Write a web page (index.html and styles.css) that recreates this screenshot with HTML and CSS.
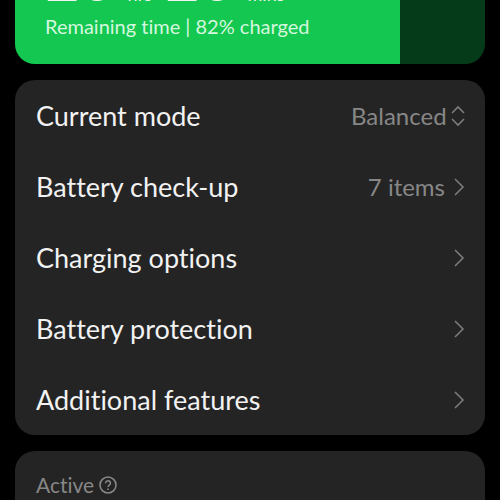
FILE: index.html
```html
<!DOCTYPE html>
<html lang="en">
<head>
<meta charset="utf-8">
<meta name="viewport" content="width=device-width, initial-scale=1">
<title>Battery</title>
<link rel="stylesheet" href="styles.css">
</head>
<body>
<main class="page">
  <section class="battery" style="--level: 82%">
    <p class="time"><span class="digits">20</span><span class="unit">hrs</span><span class="digits">20</span><span class="unit">mins</span></p>
    <p class="status">Remaining time | 82% charged</p>
  </section>

  <section class="card">
    <div class="row">
      <label class="name" for="mode">Current mode</label>
      <select class="value mode" id="mode">
        <option>Balanced</option>
      </select>
      <svg class="updown" viewBox="0 0 14 22" aria-hidden="true"><path d="M1 8 7 2l6 6M1 14l6 6 6-6"/></svg>
    </div>
    <a class="row" href="#checkup">
      <span class="name">Battery check-up</span>
      <span class="value">7 items</span>
      <svg class="chevron" viewBox="0 0 12 18" aria-hidden="true"><path d="m2 1 8 8-8 8"/></svg>
    </a>
    <a class="row" href="#charging">
      <span class="name">Charging options</span>
      <svg class="chevron" viewBox="0 0 12 18" aria-hidden="true"><path d="m2 1 8 8-8 8"/></svg>
    </a>
    <a class="row" href="#protection">
      <span class="name">Battery protection</span>
      <svg class="chevron" viewBox="0 0 12 18" aria-hidden="true"><path d="m2 1 8 8-8 8"/></svg>
    </a>
    <a class="row" href="#features">
      <span class="name">Additional features</span>
      <svg class="chevron" viewBox="0 0 12 18" aria-hidden="true"><path d="m2 1 8 8-8 8"/></svg>
    </a>
  </section>

  <section class="card usage">
    <h2 class="caption">Active</h2>
    <button class="help" type="button" aria-label="About active use">
      <svg class="help-icon" viewBox="0 0 18 18" aria-hidden="true"><circle cx="9" cy="9" r="8"/><path d="M6.600 7.200a2.400 2.400 0 1 1 3.700 2C9.400 9.800 9 10.200 9 11.100M9 12.400v1.600"/></svg>
    </button>
  </section>
</main>
</body>
</html>
```
FILE: styles.css
```css
* {
  box-sizing: border-box;
}

html {
  overflow: hidden;
}

body {
  margin: 0;
  background: #000;
  color: #f2f2f2;
  font-family: Lato, "Open Sans", sans-serif;
  font-variant-ligatures: none;
}

/* The list is scrolled so that the big time is mostly out of view. */
.page {
  display: flex;
  flex-direction: column;
  gap: 16px;
  margin-top: -58px;
  padding: 0 15px;
}

.battery {
  padding: 0 30px 26px;
  border-radius: 0 0 20px 20px;
  background: linear-gradient(to right, #13c750 var(--level), #053b19 var(--level));
}

.time {
  display: flex;
  align-items: baseline;
  gap: 13px;
  margin: 0;
}

.digits {
  font-size: 60px;
  line-height: 72px;
}

.unit {
  font-size: 18px;
  line-height: 24px;
}

.status {
  margin: 0;
  color: #d5f7df;
  font-size: 20px;
  line-height: 24px;
}

.card {
  border-radius: 20px;
  background: #242424;
}

.row {
  display: flex;
  align-items: center;
  min-height: 71px;
  padding: 0 20px 0 21px;
  color: inherit;
  text-decoration: none;
}

.name {
  flex: 1;
  font-size: 27px;
  line-height: 32px;
}

.value {
  color: #878787;
  font-size: 24px;
  line-height: 32px;
}

.mode {
  appearance: none;
  padding: 0;
  border: 0;
  background: none;
  font-family: inherit;
}

.updown,
.chevron,
.help-icon {
  display: block;
  fill: none;
  stroke: #7b7b7b;
  stroke-width: 1.6;
}

.updown {
  width: 14px;
  height: 22px;
  margin-left: 4px;
}

.chevron {
  width: 12px;
  height: 18px;
  margin-left: 8px;
}

.usage {
  display: flex;
  align-items: center;
  gap: 5px;
  padding: 20px 21px;
}

.caption {
  margin: 0;
  color: #878787;
  font-size: 21px;
  font-weight: 400;
  line-height: 28px;
}

.help {
  padding: 0;
  border: 0;
  background: none;
}

.help-icon {
  width: 18px;
  height: 18px;
  stroke: #878787;
}
```
